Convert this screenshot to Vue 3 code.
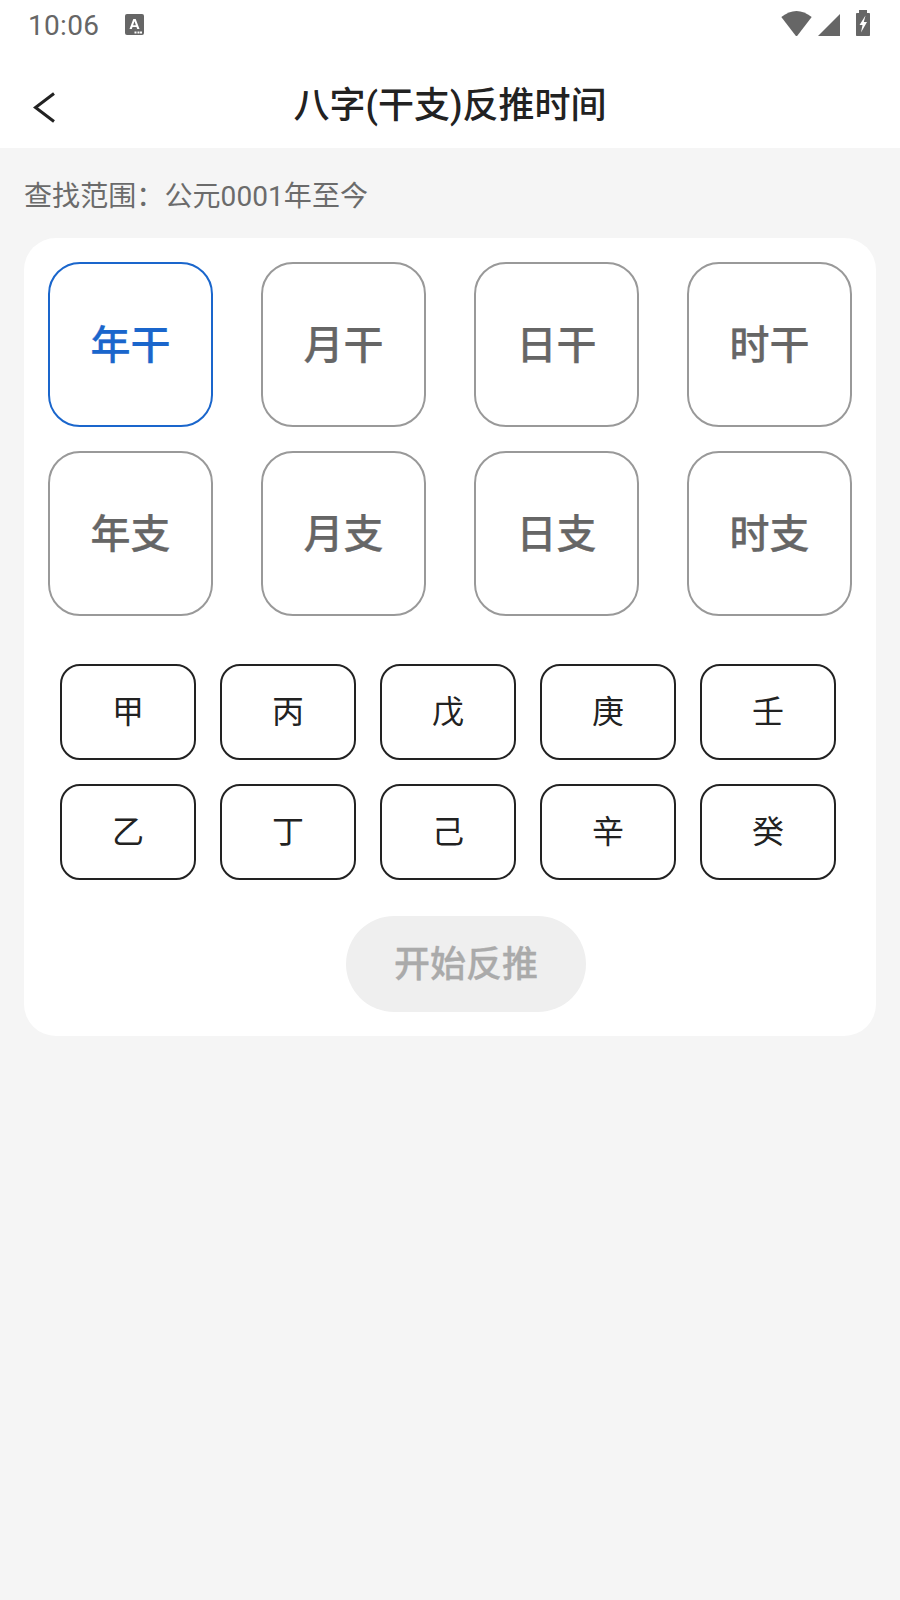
<template>
  <div class="page">
    <div class="status">
      <span class="status__time">10:06</span>
      <svg class="status__a" width="19" height="21" viewBox="0 0 19 21">
        <rect x="0" y="0" width="19" height="21" rx="2" fill="#666" />
        <path d="M4.5 15 L8.3 5 H10.7 L14.5 15 H12.2 L11.5 13 H7.5 L6.8 15 Z M8.1 11.2 H10.9 L9.5 7.3 Z" fill="#fff" fill-rule="evenodd" />
        <rect x="9.5" y="17.5" width="2" height="2" fill="#fff" />
        <rect x="12.5" y="17.5" width="2" height="2" fill="#fff" />
        <rect x="15" y="17.5" width="2" height="2" fill="#fff" />
      </svg>
      <div class="status__right">
        <svg class="status__wifi" width="31" height="25" viewBox="0 0 31 25">
          <path d="M0.3 6 Q15.5 -6 30.7 6 L16.5 24.5 Q15.5 25.5 14.5 24.5 Z" fill="#666" />
        </svg>
        <svg class="status__signal" width="22" height="22" viewBox="0 0 22 22">
          <path d="M0 22 L22 0 V22 Z" fill="#666" />
        </svg>
        <svg class="status__battery" width="14" height="26" viewBox="0 0 14 26">
          <path d="M3 0 H11 V3 H13 C13.6 3 14 3.5 14 4 V25 C14 25.6 13.6 26 13 26 H1 C0.4 26 0 25.6 0 25 V4 C0 3.5 0.4 3 1 3 H3 Z" fill="#666" />
          <path d="M9.5 5.5 L3.5 15 H6.5 L5 22.5 L11 12 H7.8 Z" fill="#fff" />
        </svg>
      </div>
    </div>
    <header class="nav">
      <svg class="nav__back" width="24" height="32" viewBox="0 0 24 32">
        <path d="M22 2.5 L3.5 16.5 L22 30.5" fill="none" stroke="#222" stroke-width="3" />
      </svg>
      <h1 class="nav__title">八字(干支)反推时间</h1>
    </header>
    <main class="body">
      <p class="range">查找范围：公元0001年至今</p>
      <section class="card">
        <div class="pillars">
          <div
            v-for="(p, i) in pillars"
            :key="p"
            :class="['pillar', { 'pillar--active': i === 0 }]"
          >{{ p }}</div>
        </div>
        <div class="stems">
          <div v-for="s in stems" :key="s" class="stem">{{ s }}</div>
        </div>
        <div class="actions">
          <button type="button" class="start" disabled>开始反推</button>
        </div>
      </section>
    </main>
  </div>
</template>

<script setup>
const pillars = ['年干', '月干', '日干', '时干', '年支', '月支', '日支', '时支']
const stems = ['甲', '丙', '戊', '庚', '壬', '乙', '丁', '己', '辛', '癸']
</script>

<style>
html, body {
  margin: 0;
  background: #f5f5f5;
}
</style>

<style scoped>
.page {
  width: 900px;
  height: 1600px;
  background: #f5f5f5;
  font-family: Roboto, "Noto Sans CJK SC", sans-serif;
  overflow: hidden;
}

.status {
  display: flex;
  align-items: center;
  box-sizing: border-box;
  height: 52px;
  padding: 0 30px 4px 28px;
  background: #fff;
}

.status__time {
  padding-top: 2px;
  font-size: 28px;
  color: #666;
  letter-spacing: 0.3px;
}

.status__a {
  margin-left: 26px;
}

.status__right {
  display: flex;
  align-items: flex-end;
  height: 26px;
  margin-bottom: 2px;
  margin-left: auto;
}

.status__signal {
  margin-left: 6px;
}

.status__battery {
  margin-left: 16px;
}

.nav {
  position: relative;
  display: flex;
  align-items: center;
  justify-content: center;
  box-sizing: border-box;
  height: 96px;
  padding-top: 4px;
  background: #fff;
}

.nav__back {
  position: absolute;
  left: 32px;
  top: 39px;
}

.nav__title {
  margin: 0;
  font-size: 36px;
  font-weight: 500;
  color: #222;
}

.body {
  padding: 0 24px;
}

.range {
  margin: 0;
  padding: 28px 0 20px;
  font-size: 28px;
  line-height: 42px;
  letter-spacing: 0.08px;
  color: #6b6b6b;
}

.card {
  padding: 24px;
  background: #fff;
  border-radius: 32px;
}

.pillars {
  display: grid;
  grid-template-columns: repeat(4, 165px);
  gap: 24px 48px;
}

.pillar {
  display: flex;
  align-items: center;
  justify-content: center;
  box-sizing: border-box;
  height: 165px;
  padding-bottom: 6px;
  font-size: 40px;
  font-weight: 500;
  color: #666;
  border: 2px solid #999;
  border-radius: 32px;
  -webkit-text-stroke: 0.25px currentColor;
}

.pillar--active {
  color: #1a66cc;
  border-color: #1a66cc;
}

.stems {
  display: grid;
  grid-template-columns: repeat(5, 136px);
  gap: 24px;
  margin-top: 48px;
  padding: 0 12px;
}

.stem {
  display: flex;
  align-items: center;
  justify-content: center;
  box-sizing: border-box;
  height: 96px;
  padding-bottom: 6px;
  font-size: 32px;
  color: #222;
  border: 2px solid #222;
  border-radius: 20px;
}

.actions {
  display: flex;
  justify-content: center;
  margin-top: 36px;
  padding-left: 32px;
}

.start {
  width: 240px;
  height: 96px;
  padding: 0 0 6px;
  font-family: inherit;
  font-size: 36px;
  font-weight: 500;
  color: #aaa;
  background: #efefef;
  border: none;
  border-radius: 48px;
  -webkit-text-stroke: 0.3px currentColor;
}
</style>
